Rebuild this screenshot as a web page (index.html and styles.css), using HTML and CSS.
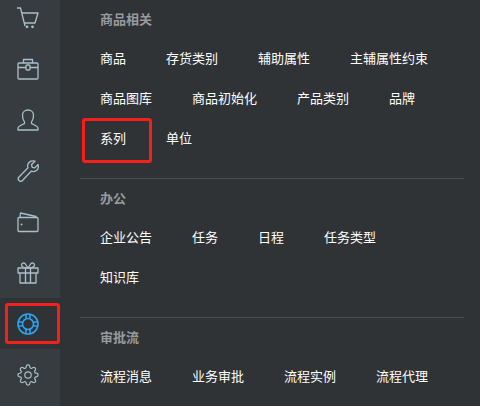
FILE: index.html
```html
<!DOCTYPE html>
<html lang="zh-CN">
<head>
    <meta charset="UTF-8">
    <title>菜单</title>
    <link rel="stylesheet" href="styles.css">
</head>
<body>
    <div class="app">
        <div class="sidebar">
            <a class="side-item">
                <svg class="icon" viewBox="0 0 22 22"><path d="M0 1h3.500l4.500 18M5 6h16l-3 10H7.500"/><circle cx="10" cy="19.800" r="1.400" class="dot"/><circle cx="15.500" cy="19.800" r="1.400" class="dot"/></svg>
            </a>
            <a class="side-item">
                <svg class="icon" viewBox="0 0 22 22"><rect x="1" y="5" width="20" height="16" rx="1"/><path d="M6.500 5V1.500h9V5M1 9.500h8M13 9.500h8"/><rect x="9" y="7" width="4" height="5" rx="1"/></svg>
            </a>
            <a class="side-item">
                <svg class="icon" viewBox="0 0 22 22"><path d="M1 21v-2c0-2 5-3.500 6.500-4.500.5-1 0-2-1-3.500C5.500 9.500 5.500 7.500 5.500 6 5.500 3 8 1 11 1s5.500 2 5.500 5c0 1.500 0 3.500-1 5-1 1.500-1.500 2.500-1 3.500C16 15.500 21 17 21 19v2z"/></svg>
            </a>
            <a class="side-item">
                <svg class="icon" viewBox="0 0 22 22"><path d="M21 4.500c.8 2.500 0 5-2 6.300-1.500 1-3.300 1-4.800.4L5.500 20.500c-1 1-2.500 1-3.500 0s-1-2.500 0-3.500l9-9.200c-.6-1.600-.4-3.400.6-4.800C13 1 15.500.4 18 1.200l-3.500 3.300.7 2.800 2.600.6z"/></svg>
            </a>
            <a class="side-item">
                <svg class="icon" viewBox="0 0 22 22"><path d="M3 6.500 3.500 2 19 5.500v1"/><rect x="1" y="6.500" width="20" height="14" rx="1"/><circle cx="4.500" cy="13.500" r="1" class="dot"/></svg>
            </a>
            <a class="side-item">
                <svg class="icon" viewBox="0 0 22 22"><rect x="1" y="6" width="20" height="5"/><path d="M3 11v10h16V11M8.500 6v15M13.500 6v15M11 6C8 6 4.500 5 4.500 3S7 .5 8 1.500L11 6l3-4.500c1-1 3.500-.5 3.500 1.500S14 6 11 6"/></svg>
            </a>
            <a class="side-item active">
                <svg class="icon" viewBox="0 0 22 22"><circle cx="11" cy="11" r="10"/><circle cx="11" cy="11" r="5.500"/><path d="M9 1.500v4M13 1.500v4M9 16.500v4M13 16.500v4M1.500 9h4M1.500 13h4M16.500 9h4M16.500 13h4"/></svg>
                <span class="mark mark-side"></span>
            </a>
            <a class="side-item">
                <svg class="icon" viewBox="0 0 24 24"><circle cx="12" cy="12" r="3.500"/><path d="M19.400 15a1.650 1.650 0 0 0 .33 1.820l.06.06a2 2 0 0 1 0 2.830 2 2 0 0 1-2.830 0l-.06-.06a1.650 1.650 0 0 0-1.820-.33 1.650 1.650 0 0 0-1 1.510V21a2 2 0 0 1-2 2 2 2 0 0 1-2-2v-.09A1.650 1.650 0 0 0 9 19.400a1.650 1.650 0 0 0-1.820.33l-.06.06a2 2 0 0 1-2.830 0 2 2 0 0 1 0-2.830l.06-.06a1.650 1.650 0 0 0 .33-1.820 1.650 1.650 0 0 0-1.510-1H3a2 2 0 0 1-2-2 2 2 0 0 1 2-2h.09A1.650 1.650 0 0 0 4.600 9a1.650 1.650 0 0 0-.33-1.820l-.06-.06a2 2 0 0 1 0-2.830 2 2 0 0 1 2.830 0l.06.06a1.650 1.650 0 0 0 1.820.33H9a1.650 1.650 0 0 0 1-1.510V3a2 2 0 0 1 2-2 2 2 0 0 1 2 2v.09a1.650 1.650 0 0 0 1 1.510 1.650 1.650 0 0 0 1.820-.33l.06-.06a2 2 0 0 1 2.830 0 2 2 0 0 1 0 2.830l-.06.06a1.650 1.650 0 0 0-.33 1.820V9a1.650 1.650 0 0 0 1.510 1H21a2 2 0 0 1 2 2 2 2 0 0 1-2 2h-.09a1.650 1.650 0 0 0-1.510 1z"/></svg>
            </a>
        </div>
        <div class="panel">
            <div class="group">
                <div class="group-title">商品相关</div>
                <div class="links">
                    <a class="link">商品</a>
                    <a class="link">存货类别</a>
                    <a class="link">辅助属性</a>
                    <a class="link">主辅属性约束</a>
                    <a class="link">商品图库</a>
                    <a class="link">商品初始化</a>
                    <a class="link">产品类别</a>
                    <a class="link">品牌</a>
                    <a class="link marked">系列<span class="mark mark-link"></span></a>
                    <a class="link">单位</a>
                </div>
            </div>
            <div class="group">
                <div class="group-title">办公</div>
                <div class="links">
                    <a class="link">企业公告</a>
                    <a class="link">任务</a>
                    <a class="link">日程</a>
                    <a class="link">任务类型</a>
                    <a class="link">知识库</a>
                </div>
            </div>
            <div class="group">
                <div class="group-title">审批流</div>
                <div class="links">
                    <a class="link">流程消息</a>
                    <a class="link">业务审批</a>
                    <a class="link">流程实例</a>
                    <a class="link">流程代理</a>
                </div>
            </div>
        </div>
    </div>
</body>
</html>
```

FILE: styles.css
```css
html, body {
    margin: 0;
    height: 100%;
    overflow: hidden;
}
body {
    font-family: "Liberation Sans", "Noto Sans CJK SC", sans-serif;
    font-size: 13px;
    background: #2f3336;
}
.app {
    display: flex;
    height: 406px;
    overflow: hidden;
}
.sidebar {
    width: 60px;
    flex-shrink: 0;
    margin-top: -8px;
    background: #373c40;
}
.side-item {
    position: relative;
    display: flex;
    align-items: center;
    height: 51px;
    padding-left: 17px;
}
.side-item.active {
    background: #2f3336;
}
.icon {
    width: 22px;
    height: 22px;
    fill: none;
    stroke: #a9c0c9;
    stroke-width: 1.3;
    stroke-linejoin: round;
}
.icon .dot {
    fill: #a9c0c9;
    stroke: none;
}
.active .icon {
    stroke: #2ea3f2;
    stroke-width: 1.6;
}
.mark {
    position: absolute;
    border: 3px solid #f5201a;
    border-radius: 3px;
}
.mark-side {
    left: 5px;
    top: 5px;
    width: 49px;
    height: 35px;
}
.mark-link {
    left: 2px;
    top: -1px;
    width: 64px;
    height: 39px;
}
.panel {
    flex: 1;
    padding-left: 20px;
    padding-right: 16px;
}
.group {
    padding-bottom: 19px;
    border-bottom: 1px solid #4a4e51;
}
.group:last-child {
    border-bottom: none;
}
.group-title {
    height: 39px;
    line-height: 40px;
    padding-left: 20px;
    color: #989b9d;
    font-weight: bold;
}
.links {
    display: flex;
    flex-wrap: wrap;
}
.link {
    position: relative;
    height: 40px;
    line-height: 40px;
    padding: 0 20px;
    color: #fff;
}
```
